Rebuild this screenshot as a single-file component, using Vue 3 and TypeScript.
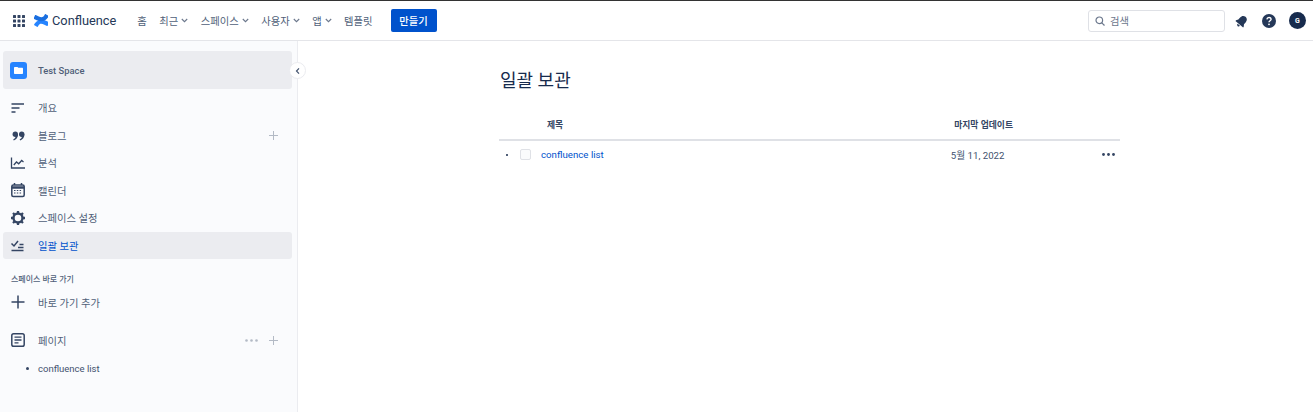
<template>
  <div class="page">
    <header class="topbar">
      <svg class="grid-icon" width="14" height="14" viewBox="0 0 14 14" fill="#344563">
        <template v-for="y in [1, 5.5, 10]" :key="y">
          <rect v-for="x in [1, 5.5, 10]" :key="x" :x="x" :y="y" width="3" height="3" rx="0.5" />
        </template>
      </svg>
      <svg class="logo" width="14" height="13" viewBox="0 0 30 28">
        <path fill="#2684ff" d="M1.500 20.500c-.4.700-.9 1.500-1.300 2.100-.3.600-.1 1.300.5 1.700l5.600 3.400c.6.400 1.300.2 1.700-.4.300-.5.800-1.300 1.300-2.200 3.400-5.600 6.800-4.900 13-2l5.500 2.600c.6.300 1.400 0 1.600-.6l2.700-6c.3-.6 0-1.300-.6-1.600-1.200-.6-3.500-1.700-5.600-2.700C17.500 10.700 8.500 11 1.500 20.500z" />
        <path fill="#1a6fe0" d="M28.500 7.500c.4-.7.900-1.500 1.300-2.100.3-.6.100-1.300-.5-1.700L23.700.3c-.6-.4-1.300-.2-1.700.4-.3.500-.8 1.300-1.300 2.200-3.400 5.600-6.800 4.900-13 2L2.200 2.300C1.600 2 .8 2.300.6 2.900l-2.700 6c-.3.600 0 1.300.6 1.600 1.200.6 3.500 1.700 5.600 2.700C12.500 17.300 21.500 17 28.500 7.500z" transform="translate(1.500 0)" />
      </svg>
      <span class="brand">Confluence</span>
      <nav class="nav">
        <span v-for="item in navItems" :key="item.label" class="nav-item">
          {{ item.label }}
          <svg v-if="item.caret" width="7" height="5" viewBox="0 0 7 5" fill="none" stroke="#6b778c" stroke-width="1.100"><path d="M.8 1l2.700 2.700L6.200 1" /></svg>
        </span>
      </nav>
      <button class="create">만들기</button>
      <div class="search">
        <svg width="10" height="10" viewBox="0 0 10 10" fill="none" stroke="#6b778c" stroke-width="1.200"><circle cx="4.300" cy="4.300" r="3.300" /><path d="M6.800 6.800L9.500 9.500" /></svg>
        <span>검색</span>
      </div>
      <svg class="tool bell" width="14" height="14" viewBox="0 0 14 14" fill="#253858">
        <g transform="rotate(40 7 7)">
          <path d="M7 1.500c2.300 0 3.700 1.800 3.700 4v2.800l1.300 2v.9H2v-.9l1.300-2V5.500c0-2.200 1.400-4 3.700-4z" />
          <path d="M5.500 12h3c0 1-.6 1.700-1.500 1.700S5.500 13 5.500 12z" />
        </g>
      </svg>
      <svg class="tool help" width="14" height="14" viewBox="0 0 14 14">
        <circle cx="7" cy="7" r="7" fill="#253858" />
        <path d="M4.900 5.400c.1-1.200 1-1.900 2.100-1.900 1.200 0 2.100.7 2.100 1.800 0 1.500-2.100 1.500-2.100 3" fill="none" stroke="#fff" stroke-width="1.400" />
        <circle cx="7" cy="10.300" r="0.900" fill="#fff" />
      </svg>
      <span class="avatar">G</span>
    </header>

    <div class="body">
      <aside class="sidebar">
        <button class="collapse" aria-label="collapse">
          <svg width="6" height="8" viewBox="0 0 6 8" fill="none" stroke="#42526e" stroke-width="1.200"><path d="M4 1.300L1.500 4 4 6.700" /></svg>
        </button>
        <div class="space">
          <span class="space-icon">
            <svg width="9" height="7" viewBox="0 0 9 7"><path fill="#fff" d="M0 1c0-.6.400-1 1-1h2.500l.8.800H8c.6 0 1 .4 1 1V6c0 .6-.4 1-1 1H1c-.6 0-1-.4-1-1z" /></svg>
          </span>
          <span class="space-name">Test Space</span>
        </div>

        <ul class="menu">
          <li v-for="item in menu" :key="item.label" class="menu-item" :class="{ active: item.active }">
            <svg class="menu-icon" width="16" height="16" viewBox="0 0 16 16" fill="none" stroke="#344563" stroke-width="1.500" v-html="item.icon"></svg>
            <span class="menu-label">{{ item.label }}</span>
            <svg v-if="item.plus" class="plus" width="9" height="9" viewBox="0 0 9 9" stroke="#b3bac5" stroke-width="1"><path d="M4.500 0v9M0 4.500h9" /></svg>
          </li>
        </ul>

        <div class="section-title">스페이스 바로 가기</div>
        <div class="menu-item shortcut">
          <svg class="menu-icon" width="16" height="16" viewBox="0 0 16 16" stroke="#344563" stroke-width="1.500"><path d="M8 1.500v13M1.500 8h13" /></svg>
          <span class="menu-label">바로 가기 추가</span>
        </div>
        <div class="menu-item pages">
          <svg class="menu-icon" width="16" height="16" viewBox="0 0 16 16" fill="none" stroke="#344563">
            <rect x="1.800" y="1.800" width="12.400" height="12.400" rx="1.800" stroke-width="1.500" />
            <path d="M4.500 5.200h7M4.500 8h7M4.500 10.800h4" stroke-width="1.300" />
          </svg>
          <span class="menu-label">페이지</span>
          <svg class="more" width="13" height="3" viewBox="0 0 13 3" fill="#b3bac5"><circle cx="1.500" cy="1.500" r="1.300" /><circle cx="6.500" cy="1.500" r="1.300" /><circle cx="11.500" cy="1.500" r="1.300" /></svg>
          <svg class="plus" width="9" height="9" viewBox="0 0 9 9" stroke="#b3bac5" stroke-width="1"><path d="M4.500 0v9M0 4.500h9" /></svg>
        </div>
        <div class="tree-item"><i></i>confluence list</div>
      </aside>

      <main class="content">
        <div class="inner">
          <h1>일괄 보관</h1>
          <div class="row head">
            <span class="col-title">제목</span>
            <span class="col-date">마지막 업데이트</span>
          </div>
          <div class="row entry">
            <i class="dot"></i>
            <span class="check"></span>
            <a class="link">confluence list</a>
            <span class="date">5월 11, 2022</span>
            <svg class="actions" width="13" height="3" viewBox="0 0 13 3" fill="#344563"><circle cx="1.500" cy="1.500" r="1.400" /><circle cx="6.500" cy="1.500" r="1.400" /><circle cx="11.500" cy="1.500" r="1.400" /></svg>
          </div>
        </div>
      </main>
    </div>
  </div>
</template>

<script setup lang="ts">
interface MenuItem {
  label: string;
  icon: string;
  plus?: boolean;
  active?: boolean;
}

const navItems = [
  { label: "홈", caret: false },
  { label: "최근", caret: true },
  { label: "스페이스", caret: true },
  { label: "사용자", caret: true },
  { label: "앱", caret: true },
  { label: "템플릿", caret: false },
];

const menu: MenuItem[] = [
  { label: "개요", icon: '<path d="M1.500 4h12.500M1.500 8h8M1.500 12h4" />' },
  {
    label: "블로그",
    plus: true,
    icon: '<g fill="#344563" stroke="none"><circle cx="5.300" cy="7.300" r="2.700" /><path d="M8 7.300c0 3.200-1.600 5.300-4.200 6.300l-.6-1.100c1.600-.8 2.500-2.100 2.500-3.700z" /><circle cx="11.700" cy="7.300" r="2.700" /><path d="M14.400 7.300c0 3.200-1.600 5.300-4.200 6.300l-.6-1.100c1.600-.8 2.500-2.100 2.500-3.700z" /></g>',
  },
  {
    label: "분석",
    icon: '<path d="M1.500 2.500v10.500h13.500" stroke-width="1.300" /><path d="M3.800 10l2.700-3 2.200 1.800 3-3.300 1.800 1.500" stroke-width="1.300" />',
  },
  {
    label: "캘린더",
    icon: '<rect x="1.800" y="3" width="12.400" height="11.500" rx="1.500" /><path d="M1.800 5.500h12.400" stroke-width="2.500" /><path d="M4.500 1v2M11.500 1v2" /><path d="M4 8.500h8M4 11h8" stroke-width="1.200" stroke-dasharray="1.500 1.300" />',
  },
  {
    label: "스페이스 설정",
    icon: '<circle cx="8" cy="8" r="4.500" stroke-width="2.400" /><path d="M8 1v2M8 13v2M1 8h2M13 8h2M3 3l1.500 1.500M11.500 11.500L13 13M3 13l1.500-1.500M11.500 4.500L13 3" stroke-width="2.300" />',
  },
  {
    label: "일괄 보관",
    active: true,
    icon: '<path d="M1.500 6.500l2.500 2.500 4-5" /><path d="M9.500 7.500h4M8 10.500h5.500M1.500 13.500h12" stroke-width="1.300" />',
  },
];
</script>

<style>
html,
body {
  margin: 0;
  background: #fff;
}
</style>

<style scoped>
.page {
  width: 1313px;
  height: 412px;
  overflow: hidden;
  display: flex;
  flex-direction: column;
  font-family: Roboto, "Noto Sans CJK KR", sans-serif;
  font-size: 10.300px;
  color: #42526e;
}

.topbar {
  height: 41px;
  flex: none;
  display: flex;
  align-items: center;
  box-sizing: border-box;
  border-top: 1px solid #333;
  border-bottom: 1px solid #e4e5e9;
  padding-left: 12px;
  background: #fff;
}

.grid-icon {
  margin-right: 8px;
}

.brand {
  margin-left: 4px;
  font-size: 12.800px;
  color: #253858;
}

.nav {
  display: flex;
  gap: 12.500px;
  margin-left: 21px;
}

.nav-item {
  display: flex;
  align-items: center;
  gap: 3px;
  color: #505f79;
}

.create {
  width: 46px;
  height: 23px;
  margin-left: 18px;
  padding: 0;
  border: 0;
  border-radius: 2px;
  background: #0052cc;
  color: #fff;
  font: inherit;
  font-weight: 500;
}

.search {
  width: 137px;
  height: 22px;
  box-sizing: border-box;
  margin-left: auto;
  display: flex;
  align-items: center;
  gap: 5px;
  padding-left: 6px;
  border: 1px solid #dfe1e6;
  border-radius: 3px;
  color: #6b778c;
}

.tool {
  margin-left: 10px;
}

.help {
  margin-left: 13px;
}

.avatar {
  width: 17px;
  height: 17px;
  margin: 0 7px 0 13px;
  border-radius: 50%;
  background: #172b4d;
  color: #fff;
  font-size: 7px;
  font-weight: 700;
  display: flex;
  align-items: center;
  justify-content: center;
}

.body {
  flex: 1;
  display: flex;
  min-height: 0;
}

.sidebar {
  position: relative;
  width: 298px;
  flex: none;
  box-sizing: border-box;
  padding: 10px 5px 0 3px;
  background: #fafbfd;
  border-right: 1px solid #ebecf0;
}

.collapse {
  position: absolute;
  top: 21px;
  right: -9px;
  width: 17px;
  height: 17px;
  padding: 0;
  border: 1px solid #ebecf0;
  border-radius: 50%;
  background: #fff;
  display: flex;
  align-items: center;
  justify-content: center;
}

.space {
  height: 38px;
  display: flex;
  align-items: center;
  gap: 11px;
  padding-left: 7px;
  border-radius: 3px;
  background: #ebecf0;
  color: #505f79;
  font-weight: 500;
}

.space-name {
  font-size: 9.400px;
}

.space-icon {
  width: 17px;
  height: 17px;
  border-radius: 3px;
  background: #2684ff;
  display: flex;
  align-items: center;
  justify-content: center;
}

.menu {
  list-style: none;
  margin: 5px 0 0;
  padding: 0;
  display: flex;
  flex-direction: column;
  gap: 0.600px;
}

.menu-item {
  height: 27px;
  display: flex;
  align-items: center;
  padding-left: 7px;
  border-radius: 3px;
  color: #505f79;
}

.menu-icon {
  flex: none;
  margin-right: 12px;
}

.menu-label {
  flex: 1;
}

.menu-item.active {
  background: #ebecf0;
  color: #0052cc;
}

.plus {
  margin-right: 14px;
}

.more {
  margin-right: 11px;
}

.section-title {
  margin: 16px 0 0 8px;
  font-size: 8px;
  line-height: 10px;
  font-weight: 500;
  color: #505f79;
}

.shortcut {
  margin-top: 4px;
}

.pages {
  margin-top: 11px;
}

.tree-item {
  display: flex;
  align-items: center;
  margin: 1px 0 0 23px;
  height: 27px;
  font-size: 9.500px;
  color: #42526e;
}

.tree-item i {
  width: 3px;
  height: 3px;
  margin-right: 9px;
  border-radius: 50%;
  background: #344563;
}

.content {
  flex: 1;
  display: flex;
}

.inner {
  width: 621px;
  margin-left: 201px;
}

h1 {
  margin: 26px 0 0 1px;
  font-size: 18px;
  line-height: 28px;
  font-weight: 400;
  color: #172b4d;
}

.row {
  display: flex;
  align-items: center;
}

.head {
  height: 30px;
  margin-top: 14px;
  border-bottom: 2px solid #dfe1e6;
  font-size: 8.800px;
  font-weight: 700;
  color: #344563;
}

.col-title {
  margin-left: 48px;
}

.col-date {
  margin-left: 391px;
}

.entry {
  height: 27px;
  font-size: 9.700px;
}

.dot {
  width: 2px;
  height: 2px;
  margin-left: 7px;
  background: #172b4d;
  border-radius: 50%;
}

.check {
  width: 9px;
  height: 9px;
  margin-left: 12px;
  border: 1px solid #dfe1e6;
  border-radius: 2px;
  background: #fafbfc;
}

.link {
  margin-left: 10px;
  color: #0052cc;
}

.date {
  margin-left: 347px;
  color: #42526e;
}

.actions {
  margin-left: auto;
  margin-right: 5px;
}
</style>
